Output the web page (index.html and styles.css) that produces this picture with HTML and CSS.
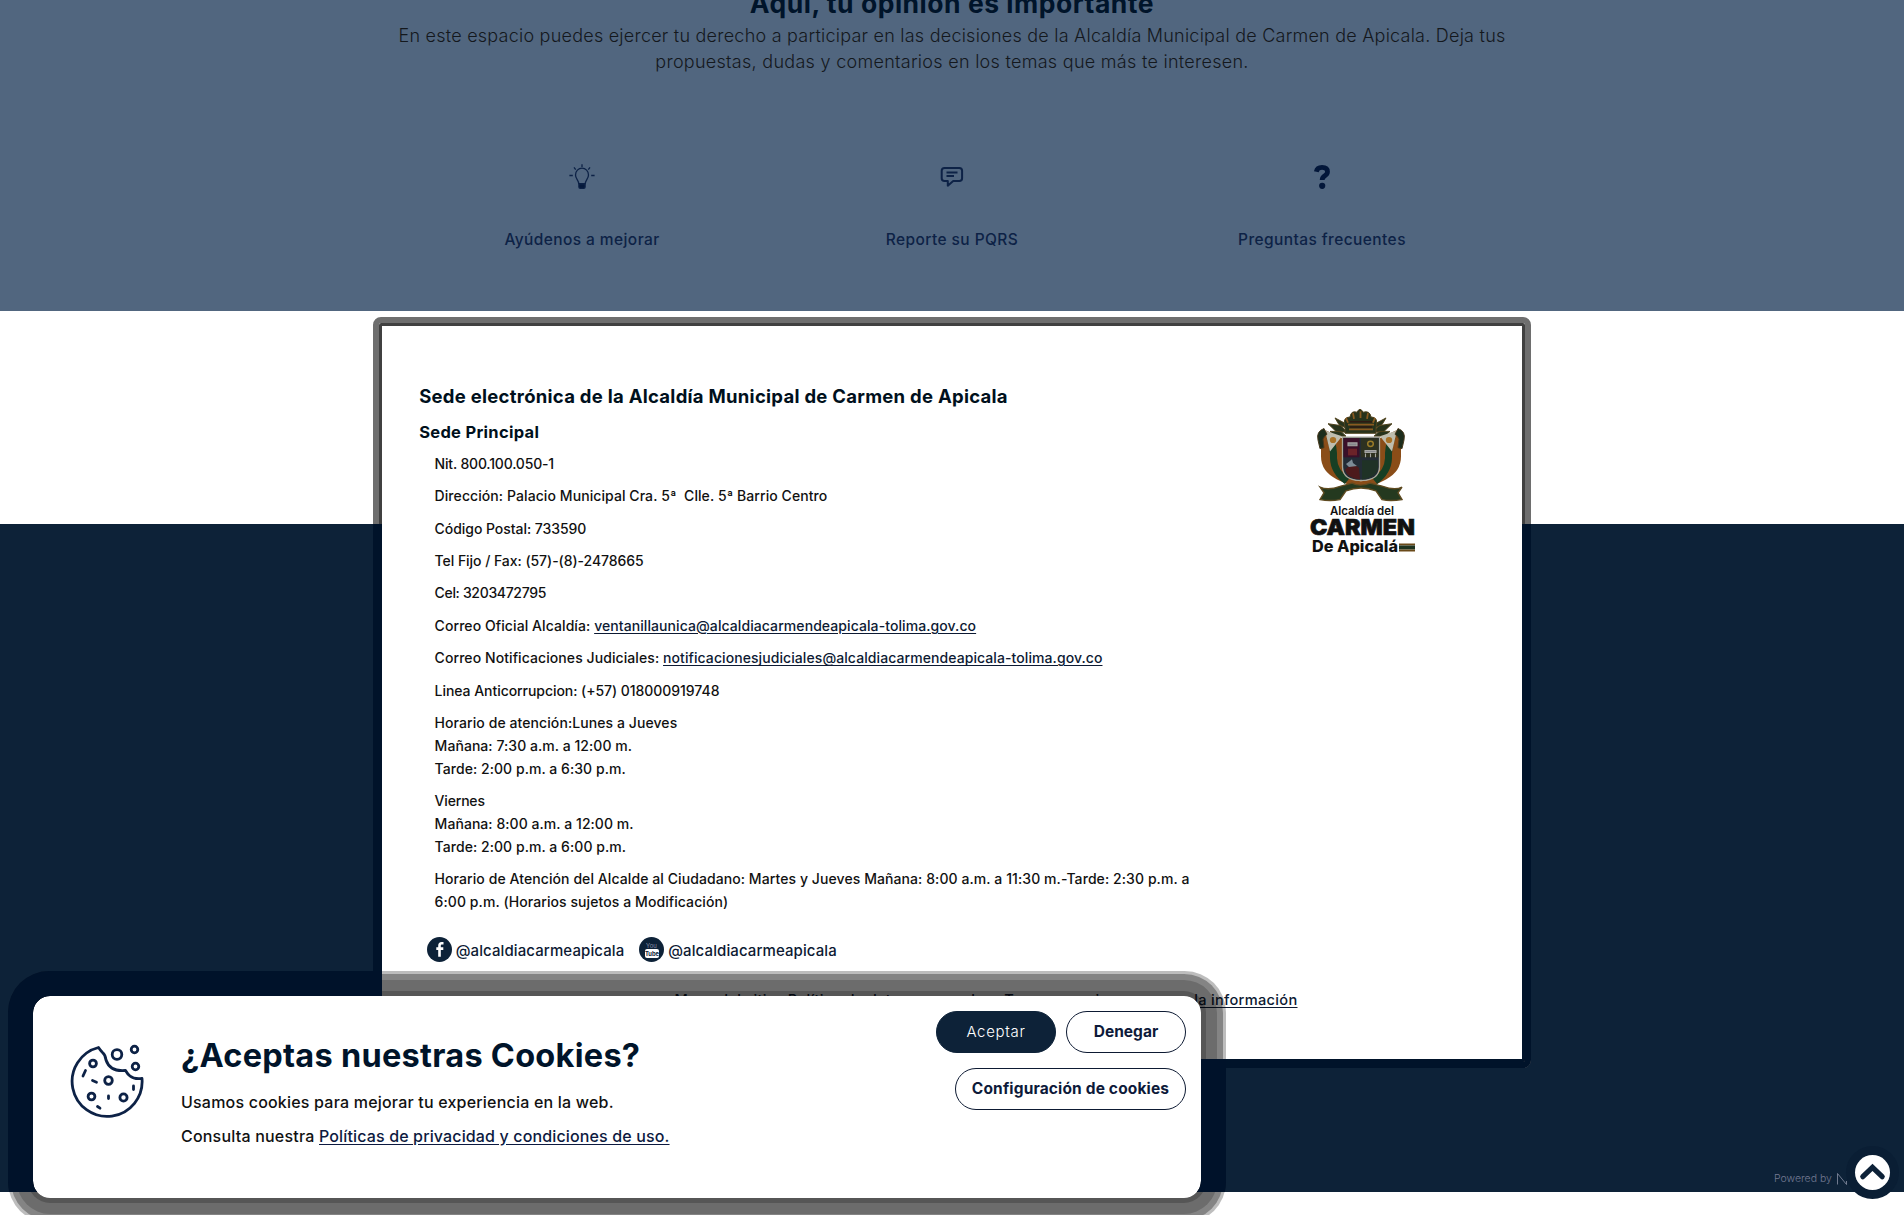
FILE: index.html
```html
<!DOCTYPE html>
<html lang="es">
<head>
<meta charset="utf-8">
<title>Alcaldía Municipal de Carmen de Apicala</title>
<link rel="stylesheet" href="styles.css">
</head>
<body>
<section class="participa">
  <h2 class="participa-title">Aquí, tu opinión es importante</h2>
  <p class="participa-intro">En este espacio puedes ejercer tu derecho a participar en las decisiones de la Alcaldía Municipal de Carmen de Apicala. Deja tus<br><span class="intro-end">propuestas, dudas y comentarios en los temas que más te interesen.</span></p>
  <div class="options">
    <a class="option">
      <svg width="32" height="32" viewBox="0 0 32 32" fill="none" stroke="#0d2246" stroke-width="1.3">
        <path d="M12.7 22.6c0-3.4-3.2-4.800-3.200-8.700a6.500 6.700 0 0 1 13 0c0 3.900-3.200 5.300-3.200 8.700z"/>
        <path d="M12.900 22.800h6.200v3.100q0 1.400-1.400 1.400h-3.400q-1.400 0-1.400-1.400z" fill="#04183a"/>
        <path d="M16 3.300v2.600M8 6.400l1.700 2.200M24 6.400l-1.700 2.200M3.400 14.500h3.400M25.200 14.500h3.400"/>
      </svg>
      <span>Ayúdenos a mejorar</span>
    </a>
    <a class="option">
      <svg width="32" height="32" viewBox="0 0 32 32" fill="none" stroke="#0d2246" stroke-width="2" stroke-linejoin="round">
        <path d="M8.500 6.900h14.800q2.800 0 2.800 2.800v7.600q0 2.800-2.800 2.800h-6.100l-5.400 4.600v-4.600h-3.300q-2.800 0-2.800-2.800v-7.600q0-2.800 2.800-2.800z"/>
        <path d="M10.500 11.500h11M10.500 15h7.500" stroke-width="1.800"/>
      </svg>
      <span>Reporte su PQRS</span>
    </a>
    <a class="option">
      <svg width="32" height="32" viewBox="0 0 32 32" fill="none">
        <path d="M10.300 10.800Q11.200 6.400 16 6.400Q21.500 6.400 21.500 10.800Q21.500 13.200 18.700 14.800Q16.200 16.300 16.200 19" stroke="#03173a" stroke-width="4.800"/>
        <circle cx="16.200" cy="24.800" r="3.100" fill="#03173a"/>
      </svg>
      <span>Preguntas frecuentes</span>
    </a>
  </div>
</section>

<footer class="site-footer">
  <div class="card">
    <div class="card-main">
      <div class="contact">
        <h3 class="entity">Sede electrónica de la Alcaldía Municipal de Carmen de Apicala</h3>
        <h4 class="office">Sede Principal</h4>
        <div class="details">
          <p class="t-num">Nit. 800.100.050-1</p>
          <p>Dirección: Palacio Municipal Cra. 5ª&nbsp; Clle. 5ª Barrio Centro</p>
          <p class="t-mid">Código Postal: 733590</p>
          <p class="t-mid">Tel Fijo / Fax: (57)-(8)-2478665</p>
          <p class="t-cel">Cel: 3203472795</p>
          <p>Correo Oficial Alcaldía: <a href="#">ventanillaunica@alcaldiacarmendeapicala-tolima.gov.co</a></p>
          <p>Correo Notificaciones Judiciales: <a href="#">notificacionesjudiciales@alcaldiacarmendeapicala-tolima.gov.co</a></p>
          <p class="t-mid">Linea Anticorrupcion: (+57) 018000919748</p>
          <p>Horario de atención:Lunes a Jueves<br><span class="hours">Mañana: 7:30 a.m. a 12:00 m.<br>Tarde: 2:00 p.m. a 6:30 p.m.</span></p>
          <p class="hours"><span class="t-num">Viernes</span><br>Mañana: 8:00 a.m. a 12:00 m.<br>Tarde: 2:00 p.m. a 6:00 p.m.</p>
          <p>Horario de Atención del Alcalde al Ciudadano: Martes y Jueves Mañana: 8:00 a.m. a 11:30 m.-Tarde: 2:30 p.m. a<br>6:00 p.m. (Horarios sujetos a Modificación)</p>
        </div>
        <div class="social">
          <a class="social-link">
            <svg width="25" height="25" viewBox="0 0 25 25"><circle cx="12.500" cy="12.500" r="12.500" fill="#0d2238"/><path d="M16.500 6.300h-1.800q-2.200 0-2.200 2.300v11.200M9.300 11.600h7" fill="none" stroke="#fff" stroke-width="2.600"/></svg>
            <span>@alcaldiacarmeapicala</span>
          </a>
          <a class="social-link">
            <svg width="25" height="25" viewBox="0 0 25 25"><circle cx="12.500" cy="12.500" r="12.500" fill="#0d2238"/><rect x="6" y="12" width="14" height="9" rx="2" fill="#fff"/><text x="12.500" y="10.500" class="yt-you">You</text><text x="13" y="19.400" class="yt-tube">Tube</text></svg>
            <span>@alcaldiacarmeapicala</span>
          </a>
        </div>
      </div>
      <svg class="crest" width="110" height="150" viewBox="0 0 110 150">
        <g transform="translate(0 -4.500) scale(1 .96)">
          <g fill="#27331c" stroke="#50431d" stroke-width="1">
            <path d="M20 20l13 2 6 7-11-1zM84 20l-13 2-6 7 11-1zM22 28l11 0 5 5-11 0zM82 28l-11 0-5 5 11 0zM27 14l9 5 3 6-8-4zM78 14l-9 5-3 6 8-4z"/>
            <path d="M37 24q-3-11 5-11 1-7 7-5 3-6 6 0 7-2 8 5 8 0 5 11v6H37z"/>
          </g>
          <path d="M38 14l2 5M45 9l1 6M52.500 7v7M60 9l-1 6M67 14l-2 5M40 21h26M41 26h24" stroke="#8a5a20" stroke-width="1.800"/>
          <path d="M42 18h22M42 23.500h22" stroke="#2e1a12" stroke-width="1.500"/>
          <path d="M18 27L13 40Q13 47 13 54Q13 70 29 78Q38 82 45 86H63Q70 82 78 78Q93 70 93 54Q93 47 93 40L88 27L72 35V65Q71 78 53 80Q35 78 34 65V35z" fill="#8a4d18"/>
          <path d="M22 34Q26 45 25.500 56Q26 70 39 80M84 34Q80 45 80.500 56Q80 70 67 80" fill="none" stroke="#173f24" stroke-width="7"/>
          <path d="M17 27L34 33 22 49zM89 27L72 33 84 49z" fill="#bfbdae"/>
          <circle cx="25" cy="37" r="3.200" fill="#a87227"/><circle cx="81" cy="37" r="3.200" fill="#a87227"/>
          <path d="M16 25q-8 3-6 12l2 9 4-1-1-9q2-4 4-5zM90 25q8 3 6 12l-2 9-4-1 1-9q-2-4-4-5z" fill="#1d2d1c" stroke="#4a391d"/>
          <path d="M34.500 34H71.500V65Q71 79 53 79Q35 79 34.500 65z" fill="#232c36" stroke="#a8a89a" stroke-width="1.300"/>
          <path d="M35.500 35h16v20h-16z" fill="#3a1029"/><path d="M53 35h17.500v20H53z" fill="#2d3120"/><path d="M37 68q7-9 14-2l1 12q-13-1-15-10z" fill="#4c1a1c"/><path d="M54 58h16v8q-1 10-16 12z" fill="#1f3226"/>
          <path d="M40 40h9v3h-9zM57 48h11v2H57zM57.500 51v4M62.500 51v4M67.500 51v4" fill="#85878c" stroke="#a5a6a4" stroke-width="1.100"/>
          <path d="M40 46h9v7h-9z" fill="#6c2329"/><circle cx="62.500" cy="41" r="2.800" fill="none" stroke="#9a7b28" stroke-width="1.500"/><path d="M38 62q4-3 6-5l1 4 4 3-8 1z" fill="#7d8b96"/>
          <path d="M12 86q8 4 21-1l11-3q8 4 18 0l12 3q13 5 20 1l-4 6 4 7q-12 2-20 0l-6-9q-15-6-30 0l-6 9q-10 2-20 0l4-7z" fill="#24391f" stroke="#5e4a20" stroke-width="1.400"/>
        </g>
        <text x="22" y="105.500" font-size="11.500" font-weight="600" textLength="64">Alcaldía del</text>
        <text x="2" y="125.500" font-size="21.500" font-weight="900" textLength="105" lengthAdjust="spacingAndGlyphs" stroke="#111" stroke-width=".6">CARMEN</text>
        <text x="4" y="142.500" font-size="16" font-weight="800" textLength="86" lengthAdjust="spacingAndGlyphs">De Apicalá</text>
        <path d="M91 135.500h16" stroke="#6a4a1a" stroke-width="2"/><path d="M91 138.500h16" stroke="#1d3320" stroke-width="4"/><path d="M91 141.500h16" stroke="#6a4a1a" stroke-width="2"/>
      </svg>
    </div>
    <nav class="policies">
      <a href="#">Mapa del sitio</a>
      <a href="#">Política de datos personales</a>
      <a href="#">Transparencia y acceso a la información</a>
    </nav>
  </div>
  <div class="credit">
    <span>Powered by</span>
    <svg width="12" height="14" viewBox="0 0 12 14" fill="none" stroke="#8a90a6" stroke-width=".8"><path d="M1.500 12.500V1.500L10.500 12.500V9"/></svg>
  </div>
</footer>

<a class="to-top">
  <svg width="35" height="35" viewBox="0 0 35 35"><path d="M7.800 21.700L17.500 12.300L27.200 21.700" fill="none" stroke="#0d2238" stroke-width="5.200" stroke-linecap="round"/></svg>
</a>

<aside class="cookies">
  <svg class="cookie-icon" width="76" height="76" viewBox="0 0 76 76" fill="none" stroke="#0d2246" stroke-width="2.800" stroke-linejoin="round" stroke-linecap="round">
    <path d="M29.500 4.500A35 35 0 1 0 73 35.500Q65 36.500 61 33Q58.500 31 56.500 27.500Q41 29 37 17Q36.500 12 33.500 9.500Q31.500 7.500 29.500 4.500z"/>
    <circle cx="24" cy="20.500" r="3.400"/><circle cx="39.500" cy="37.500" r="3.800"/><circle cx="22.500" cy="53.500" r="3.400"/><circle cx="54.500" cy="54.500" r="3.600"/>
    <circle cx="48" cy="11.500" r="4.800"/><circle cx="65.500" cy="6.500" r="3.300"/><circle cx="66.500" cy="23.500" r="3.300"/>
    <path d="M16.500 27.500l-2.500 5.500M23.500 37.500l4 1.700M64.500 43v3.500M39.500 53v2.500M28.500 63.500l2.500 1.700"/>
  </svg>
  <div class="cookie-text">
    <h2>¿Aceptas nuestras Cookies?</h2>
    <p>Usamos cookies para mejorar tu experiencia en la web.</p>
    <p>Consulta nuestra <a href="#">Políticas de privacidad y condiciones de uso.</a></p>
  </div>
  <div class="cookie-actions">
    <button class="btn btn-primary">Aceptar</button>
    <button class="btn">Denegar</button>
    <button class="btn btn-wide">Configuración de cookies</button>
  </div>
</aside>
</body>
</html>
```
FILE: styles.css
```css
* { box-sizing: border-box; }

body {
  margin: 0;
  height: 1215px;
  overflow: hidden;
  background: #fff;
  color: #111;
  font-family: Inter, "Open Sans", sans-serif;
}

h2, h3, h4, p { margin: 0; }

/* Participation section */
.participa {
  height: 311px;
  overflow: hidden;
  background: #51667f;
  text-align: center;
}
.participa-title {
  margin-top: -13px;
  font-size: 26.5px;
  font-weight: 650;
  line-height: 32px;
  letter-spacing: .52px;
  color: #00142a;
}
.participa-intro {
  margin-top: 3.5px;
  font-size: 18px;
  font-weight: 300;
  line-height: 26.2px;
  letter-spacing: .23px;
  color: #14181d;
}
.intro-end { letter-spacing: .28px; }
.options {
  display: grid;
  grid-template-columns: repeat(3, 370px);
  justify-content: center;
  margin-top: 86px;
}
.option {
  display: flex;
  flex-direction: column;
  align-items: center;
  gap: 35px;
  font-size: 15.5px;
  font-weight: 550;
  line-height: 24px;
  letter-spacing: .41px;
  color: #0d2246;
}

/* Footer */
.site-footer {
  display: flex;
  flex-direction: column;
  justify-content: space-between;
  height: 881px;
  padding-top: 15px;
  background: linear-gradient(#fff 213px, #0d2238 213px);
}
.card {
  position: relative;
  width: 1140px;
  height: 733px;
  margin: 0 auto;
  background: #fff;
}
.card::before,
.card::after {
  content: "";
  position: absolute;
  inset: -9px;
  border: 6px solid #6e6e6e;
  border-radius: 8px;
  box-shadow: inset 0 0 0 3px #404040;
  pointer-events: none;
}
/* navy edge where the card stands on the dark band */
.card::after {
  border-color: #00132a;
  box-shadow: inset 0 0 0 3px #00132a;
  clip-path: inset(207px 0 0 0);
}
.card-main {
  display: flex;
  align-items: flex-start;
  padding: 58.4px 0 0 37.2px;
}
.contact { width: 780px; white-space: nowrap; }
.entity {
  font-size: 18.5px;
  font-weight: 650;
  line-height: 24px;
  letter-spacing: .27px;
  color: #00101c;
}
.office {
  margin-top: 13.7px;
  font-size: 16.5px;
  font-weight: 700;
  line-height: 20px;
  letter-spacing: .3px;
  color: #00101c;
}
.details {
  margin: 10.6px 0 0 15.4px;
  font-size: 14px;
  font-weight: 500;
  line-height: 22.7px;
  letter-spacing: .08px;
}
.details p { margin-bottom: 9.75px; }
.details a { color: #0d1a33; text-underline-offset: 2px; }
.details .t-num { letter-spacing: -.18px; }
.details .t-mid { letter-spacing: -.05px; }
.details .t-cel { letter-spacing: -.33px; }
.details .hours { letter-spacing: .05px; }
.social {
  display: flex;
  gap: 15px;
  margin: 23.2px 0 0 7.5px;
}
.social-link {
  display: flex;
  align-items: center;
  gap: 4px;
  font-size: 15px;
  font-weight: 500;
  letter-spacing: .1px;
  color: #0d1a33;
}
.social-link span { padding-top: 2px; }
.yt-you, .yt-tube {
  font-size: 6px;
  font-weight: 400;
  letter-spacing: 0;
  text-anchor: middle;
  fill: #8a93aa;
}
.yt-tube { font-weight: 700; font-size: 5.8px; fill: #0d2238; }
.crest { margin: 24.2px 0 0 108.8px; fill: #111; }
.policies {
  display: flex;
  justify-content: flex-end;
  gap: 12px;
  margin: 27px 224.5px 0 0;
  font-size: 14.6px;
  font-weight: 500;
  line-height: 22px;
  letter-spacing: .3px;
}
.policies a { color: #0d1a33; text-underline-offset: 2px; }
.credit {
  display: flex;
  align-items: center;
  gap: 4px;
  margin: 0 0 5px 1774px;
  font-size: 10.5px;
  font-weight: 300;
  line-height: 16px;
  color: #737992;
}

/* Back to top */
.to-top {
  position: fixed;
  left: 1854.5px;
  top: 1154.5px;
  width: 35px;
  height: 35px;
  border-radius: 50%;
  background: #fff;
  box-shadow: 0 0 0 9px #0a1e34;
}

/* Cookie notice */
.cookies {
  position: fixed;
  left: 33px;
  top: 996px;
  display: flex;
  align-items: flex-start;
  width: 1168px;
  height: 202px;
  padding: 15px 15px 0 36px;
  border-radius: 17px;
  background: #fff;
}
.cookies::before,
.cookies::after {
  content: "";
  position: absolute;
  inset: 0;
  border-radius: inherit;
  pointer-events: none;
}
.cookies::before {
  box-shadow:
    0 0 0 5px rgba(0, 0, 0, .21),
    0 0 0 16px rgba(0, 0, 0, .19),
    0 0 0 22px rgba(0, 0, 0, .3),
    0 0 0 25px rgba(0, 0, 0, .26);
}
/* navy part of the halo, over the dark footer band */
.cookies::after {
  box-shadow: 0 0 0 25px #00122a;
  clip-path: polygon(-40px -40px, 349px -40px, 349px 100px, 1168px 100px, 1168px 63px, 1210px 63px, 1210px 196px, -40px 196px);
}
.cookie-icon { margin-top: 32px; }
.cookie-text {
  flex: 1;
  margin: 25.4px 0 0 36px;
  font-size: 16px;
  font-weight: 550;
  line-height: 24px;
  letter-spacing: .2px;
}
.cookie-text h2 {
  margin-bottom: 13.3px;
  font-size: 32.5px;
  font-weight: 650;
  line-height: 40px;
  letter-spacing: .27px;
  color: #00142a;
}
.cookie-text p + p { margin-top: 10px; }
.cookie-text a { color: #0d1a40; letter-spacing: .14px; text-underline-offset: 2px; }
.cookie-actions {
  display: flex;
  flex-wrap: wrap;
  justify-content: flex-end;
  gap: 15px 10px;
  width: 260px;
}
.btn {
  width: 120px;
  height: 42px;
  padding: 0 0 1px;
  border: 1.5px solid #0d1a33;
  border-radius: 21px;
  background: #fff;
  color: #0d1a3a;
  font: 700 15.5px Inter, "Open Sans", sans-serif;
}
.btn-primary {
  background: #0d2238;
  border-color: #0d2238;
  color: #fff;
  font-size: 15px;
  font-weight: 300;
  letter-spacing: .7px;
}
.btn-wide { width: 231px; letter-spacing: .15px; }
```
